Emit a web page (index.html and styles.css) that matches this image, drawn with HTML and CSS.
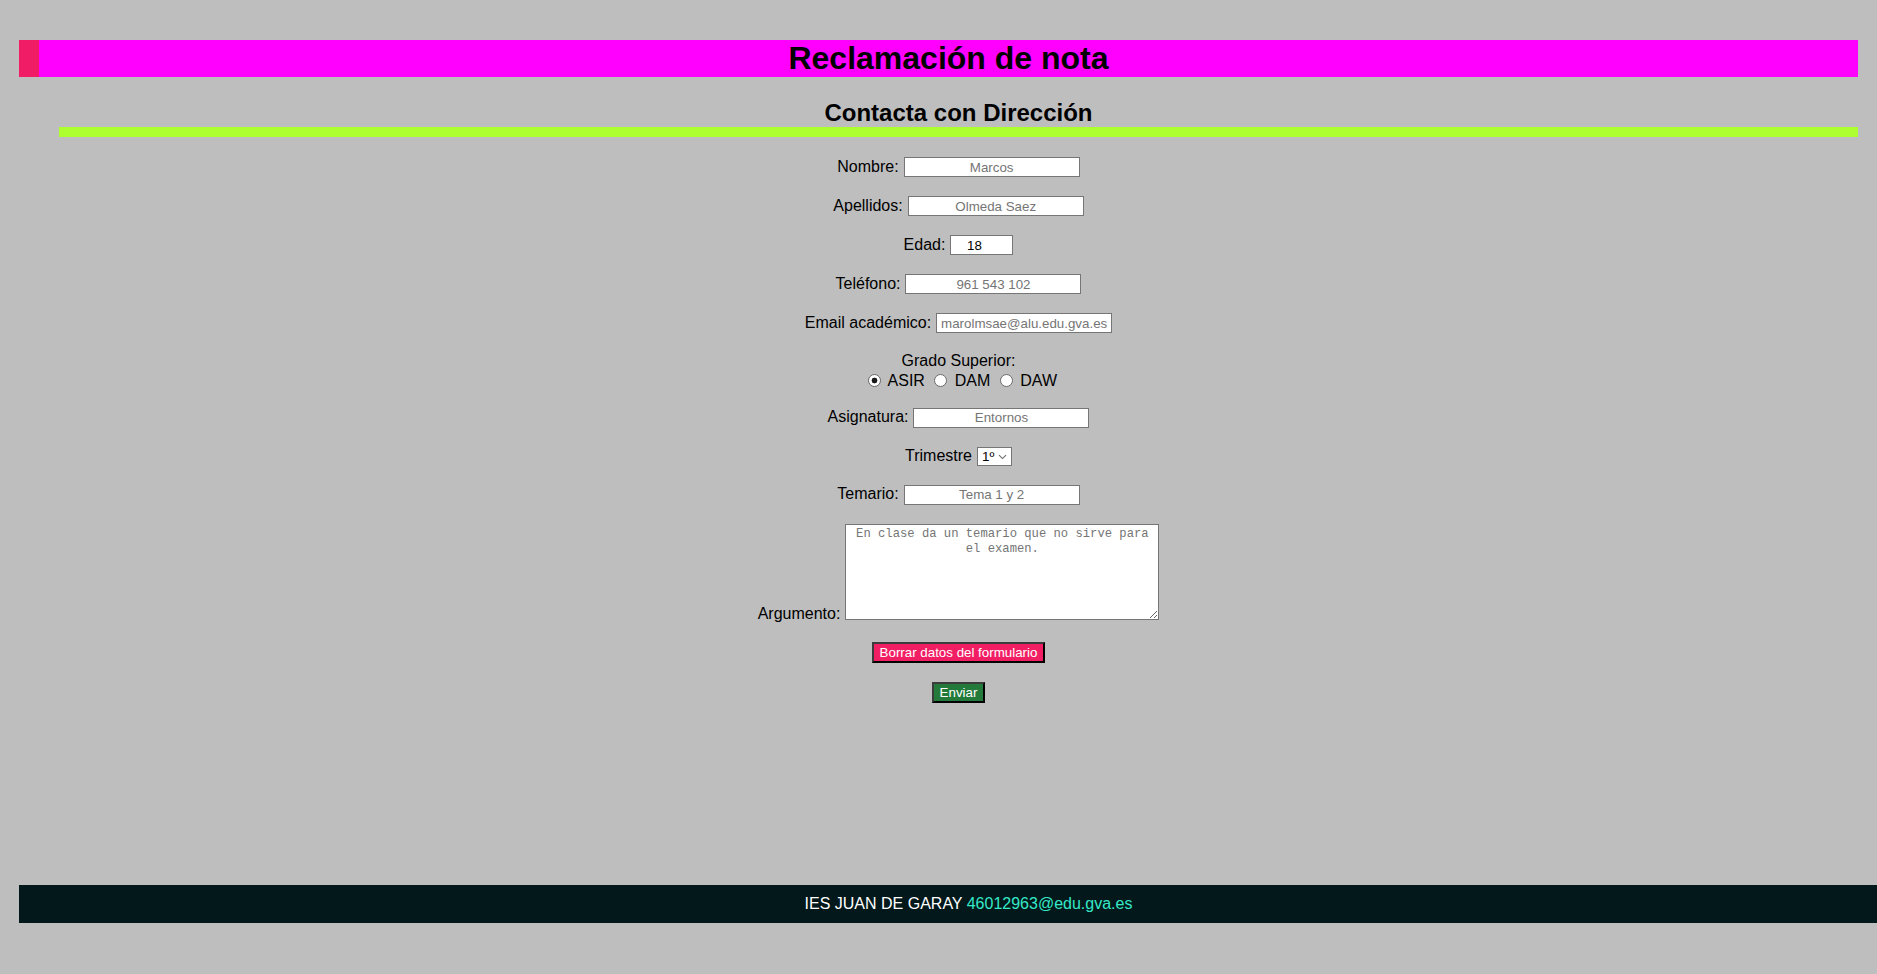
FILE: index.html
```html
<!DOCTYPE html>
<html lang="es">
<head>
<meta charset="utf-8">
<title>Reclamación de nota</title>
<link rel="stylesheet" href="styles.css">
</head>
<body>
  <header class="banner">
    <h1 class="banner-title">Reclamación de nota</h1>
  </header>

  <main class="content">
    <h2 class="section-title">Contacta con Dirección</h2>

    <form class="claim-form">
      <div class="field">
        <label for="nombre">Nombre:</label>
        <input class="text-input" type="text" id="nombre" placeholder="Marcos">
      </div>
      <div class="field">
        <label for="apellidos">Apellidos:</label>
        <input class="text-input" type="text" id="apellidos" placeholder="Olmeda Saez">
      </div>
      <div class="field">
        <label for="edad">Edad:</label>
        <input class="text-input age-input" type="number" id="edad" value="18">
      </div>
      <div class="field">
        <label for="telefono">Teléfono:</label>
        <input class="text-input" type="tel" id="telefono" placeholder="961 543 102">
      </div>
      <div class="field">
        <label for="email">Email académico:</label>
        <input class="text-input" type="email" id="email" placeholder="marolmsae@alu.edu.gva.es">
      </div>
      <div class="field-stack">
        <span class="stack-label">Grado Superior:</span>
        <div class="radios">
          <input class="radio" type="radio" name="grado" id="asir" checked> <label for="asir">ASIR</label>
          <input class="radio" type="radio" name="grado" id="dam"> <label for="dam">DAM</label>
          <input class="radio" type="radio" name="grado" id="daw"> <label for="daw">DAW</label>
        </div>
      </div>
      <div class="field">
        <label for="asignatura">Asignatura:</label>
        <input class="text-input" type="text" id="asignatura" placeholder="Entornos">
      </div>
      <div class="field field-select">
        <label for="trimestre">Trimestre</label>
        <span class="select-wrap">
          <select class="select" id="trimestre">
            <option>1º</option>
            <option>2º</option>
            <option>3º</option>
          </select>
          <svg class="select-arrow" width="9" height="6" viewBox="0 0 9 6" aria-hidden="true">
            <path d="M1 1.2 L4.5 4.6 L8 1.2" fill="none" stroke="#6b6b6b" stroke-width="1.1"/>
          </svg>
        </span>
      </div>
      <div class="field">
        <label for="temario">Temario:</label>
        <input class="text-input" type="text" id="temario" placeholder="Tema 1 y 2">
      </div>
      <div class="field field-area">
        <label for="argumento">Argumento:</label>
        <textarea class="textarea" id="argumento" placeholder="En clase da un temario que no sirve para el examen."></textarea>
      </div>
      <button type="reset" class="btn btn-reset">Borrar datos del formulario</button>
      <button type="submit" class="btn btn-send">Enviar</button>
    </form>
  </main>

  <footer class="site-footer">
    IES JUAN DE GARAY <a class="footer-link" href="#">46012963@edu.gva.es</a>
  </footer>
</body>
</html>
```

FILE: styles.css
```css
html {
  background: #bebebe;
}

body {
  margin: 0;
  padding-top: 40px;
  background: #bebebe;
  font-family: "Liberation Sans", Arial, sans-serif;
  font-size: 16px;
  color: #000;
}

::-webkit-scrollbar {
  height: 14px;
  width: 14px;
  background: #262733;
}
::-webkit-scrollbar-track {
  background: #262733;
}
::-webkit-scrollbar-thumb {
  background: #4a4c62;
  border-radius: 4px;
  border: 3px solid #262733;
  border-left-width: 12px;
}

.banner {
  margin: 0 19px;
  background: #ff00ff;
  border-left: 20px solid #f01d66;
}

.banner-title {
  margin: 0;
  font-size: 32px;
  line-height: 37px;
  font-weight: bold;
  text-align: center;
}

.content {
  margin: 0 19px 0 59px;
}

.section-title {
  margin: 22px 0 0;
  font-size: 24px;
  line-height: 28px;
  font-weight: bold;
  text-align: center;
  border-bottom: 10px solid #adff2f;
}

.claim-form {
  margin-top: 20px;
  display: flex;
  flex-direction: column;
  align-items: center;
  gap: 19px;
}

.field {
  display: flex;
  align-items: baseline;
  gap: 5px;
}

.text-input {
  box-sizing: border-box;
  width: 176px;
  height: 20px;
  margin: 0;
  padding: 1px 2px;
  border: 1px solid #767676;
  border-radius: 0;
  background: #fff;
  font-family: "Liberation Sans", Arial, sans-serif;
  font-size: 13.33px;
  text-align: center;
  color: #000;
}

.text-input::placeholder {
  color: #757575;
}

.age-input {
  width: 63px;
  padding-right: 17px;
  -moz-appearance: textfield;
}

.age-input::-webkit-inner-spin-button,
.age-input::-webkit-outer-spin-button {
  -webkit-appearance: none;
  margin: 0;
}

.field-stack {
  display: flex;
  flex-direction: column;
  align-items: center;
  line-height: 18.4px;
}

.radios {
  height: 18.4px;
  padding-top: 1.5px;
  margin-bottom: -1.5px;
  line-height: 18.4px;
  text-align: center;
  padding-left: 3px;
}

.radio {
  -webkit-appearance: none;
  appearance: none;
  box-sizing: border-box;
  width: 13px;
  height: 13px;
  margin: 0 3px 0 5px;
  border: 1px solid #6a6a6a;
  border-radius: 50%;
  background: #fff;
  vertical-align: -1px;
}

.radio:checked {
  background: radial-gradient(circle, #1a1a1a 0 2.6px, #fff 3.2px);
}

.field-select {
  align-items: center;
  height: 19px;
}

.select-wrap {
  position: relative;
  display: inline-block;
  height: 19px;
}

.select {
  -webkit-appearance: none;
  appearance: none;
  box-sizing: border-box;
  display: block;
  width: 35px;
  height: 19px;
  margin: 0;
  padding: 0 0 0 4px;
  border: 1px solid #767676;
  border-radius: 0;
  background: #fff;
  font-family: "Liberation Sans", Arial, sans-serif;
  font-size: 13.33px;
  color: #000;
}

.select-arrow {
  position: absolute;
  right: 5px;
  top: 7px;
  pointer-events: none;
}

.field-area {
  align-items: flex-end;
}

.textarea {
  box-sizing: border-box;
  width: 314px;
  height: 96px;
  margin: 0 0 3px;
  padding: 2px;
  border: 1px solid #767676;
  border-radius: 0;
  background: #fff;
  font-family: "Liberation Mono", monospace;
  font-size: 12.2px;
  line-height: 15px;
  text-align: center;
  color: #000;
}

.textarea::placeholder {
  color: #757575;
}

.btn {
  box-sizing: border-box;
  height: 21px;
  margin: 0;
  padding: 1px 6px;
  border: 2px solid;
  border-color: #3c3c3c #000 #000 #3c3c3c;
  border-radius: 0;
  font-family: "Liberation Sans", Arial, sans-serif;
  font-size: 13.33px;
  line-height: 15px;
  color: #fff;
}

.btn-reset {
  background: #f21e64;
}

.btn-send {
  background: #247a3b;
}

.site-footer {
  box-sizing: border-box;
  width: 1899px;
  margin: 182px 0 0 19px;
  padding: 10px 0;
  line-height: 18px;
  background: #02181b;
  color: #fff;
  text-align: center;
}

.footer-link {
  color: #35e8c8;
  text-decoration: none;
}
```
